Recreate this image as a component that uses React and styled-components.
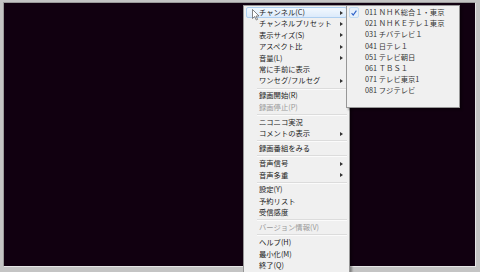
import React from 'react';
import styled, { createGlobalStyle } from 'styled-components';

const GlobalStyle = createGlobalStyle`
  html, body {
    margin: 0;
    padding: 0;
    background: #bebebe;
  }
  body {
    font-family: "Noto Sans CJK JP", "Noto Sans", sans-serif;
  }
`;

const Frame = styled.div`
  position: relative;
  width: 480px;
  height: 272px;
  box-sizing: border-box;
  padding: 2px 4px 5px 3px;
  background: #c4c4c4;
  overflow: hidden;
  display: flex;
`;

const Video = styled.div`
  flex: 1;
  background: #110010;
  border-top: 1px solid #9a9a9a;
  border-left: 1px solid #9a9a9a;
  border-right: 1px solid #e6e6e6;
  border-bottom: 1px solid #e6e6e6;
`;

const Menu = styled.div`
  position: absolute;
  left: ${(p) => p.left}px;
  top: ${(p) => p.top}px;
  width: ${(p) => p.width}px;
  height: ${(p) => p.height}px;
  box-sizing: border-box;
  padding: 1px 2px;
  background: #f0f0f0;
  border: 1px solid #979797;
  box-shadow: 2px 2px 2px rgba(0, 0, 0, 0.35);
  display: flex;
  flex-direction: column;
`;

const Item = styled.div`
  height: ${(p) => p.h}px;
  flex: none;
  box-sizing: border-box;
  display: flex;
  align-items: center;
  padding-left: ${(p) => p.indent}px;
  padding-right: 3px;
  border: 1px solid ${(p) => (p.hot ? '#aecff0' : 'transparent')};
  border-radius: 2px;
  background: ${(p) => (p.hot ? 'linear-gradient(#f2f8fe, #dcebfb)' : 'transparent')};
  color: ${(p) => (p.disabled ? '#9a9a9a' : '#1a1a1a')};
  font-size: 7.3px;
  line-height: 1;
  white-space: nowrap;
`;

const Arrow = styled.span`
  margin-left: auto;
  width: 0;
  height: 0;
  border-left: 3px solid #333;
  border-top: 2.5px solid transparent;
  border-bottom: 2.5px solid transparent;
`;

const Separator = styled.div`
  height: 3.6px;
  flex: none;
  margin-left: 11px;
  display: flex;
  align-items: center;
  &::after {
    content: '';
    flex: 1;
    height: 1px;
    background: #dcdcdc;
    border-bottom: 1px solid #fbfbfb;
  }
`;

const Channel = styled(Item)`
  color: #363636;
`;

const CheckBox = styled.span`
  width: 10px;
  height: 11px;
  margin-left: -16px;
  margin-right: 6px;
  box-sizing: border-box;
  border: 1px solid #c2dcf2;
  border-radius: 2px;
  background: #e6f0fb;
  display: flex;
  align-items: center;
  justify-content: center;
`;

const Cursor = styled.svg`
  position: absolute;
  left: 252px;
  top: 9px;
`;

const mainItems = [
  { label: 'チャンネル(C)', sub: true, hot: true },
  { label: 'チャンネルプリセット', sub: true },
  { label: '表示サイズ(S)', sub: true },
  { label: 'アスペクト比', sub: true },
  { label: '音量(L)', sub: true },
  { label: '常に手前に表示' },
  { label: 'ワンセグ/フルセグ', sub: true },
  'sep',
  { label: '録画開始(R)' },
  { label: '録画停止(P)', disabled: true },
  'sep',
  { label: 'ニコニコ実況' },
  { label: 'コメントの表示', sub: true },
  'sep',
  { label: '録画番組をみる' },
  'sep',
  { label: '音声信号', sub: true },
  { label: '音声多重', sub: true },
  'sep',
  { label: '設定(Y)' },
  { label: '予約リスト' },
  { label: '受信感度' },
  'sep',
  { label: 'バージョン情報(V)', disabled: true },
  'sep',
  { label: 'ヘルプ(H)' },
  { label: '最小化(M)' },
  { label: '終了(Q)' },
];

const channels = [
  '011 ＮＨＫ総合１・東京',
  '021 ＮＨＫＥテレ１東京',
  '031 チバテレビ１',
  '041 日テレ１',
  '051 テレビ朝日',
  '061 ＴＢＳ１',
  '071 テレビ東京1',
  '081 フジテレビ',
];

function App() {
  return (
    <>
      <GlobalStyle />
      <Frame>
        <Video />
        <Menu left={243} top={5} width={107} height={272}>
          {mainItems.map((it, i) =>
            it === 'sep' ? (
              <Separator key={i} />
            ) : (
              <Item key={i} h={11.4} indent={12} hot={it.hot} disabled={it.disabled}>
                {it.label}
                {it.sub && <Arrow />}
              </Item>
            )
          )}
        </Menu>
        <Menu left={346} top={5} width={114} height={103}>
          {channels.map((c, i) => (
            <Channel key={i} h={11.2} indent={15}>
              {i === 0 && (
                <CheckBox>
                  <svg width="6" height="6" viewBox="0 0 6 6">
                    <path d="M0.6 3.2 L2.2 5 L5.4 0.6" fill="none" stroke="#2a5fc8" strokeWidth="1.1" />
                  </svg>
                </CheckBox>
              )}
              {c}
            </Channel>
          ))}
        </Menu>
        <Cursor width="8" height="12" viewBox="0 0 8 12">
          <path d="M0.5 0.5 L0.5 9.5 L2.7 7.5 L4.3 11 L5.6 10.4 L4.1 7 L7 7 Z" fill="#fff" stroke="#666" strokeWidth="0.8" />
        </Cursor>
      </Frame>
    </>
  );
}

export default App;
